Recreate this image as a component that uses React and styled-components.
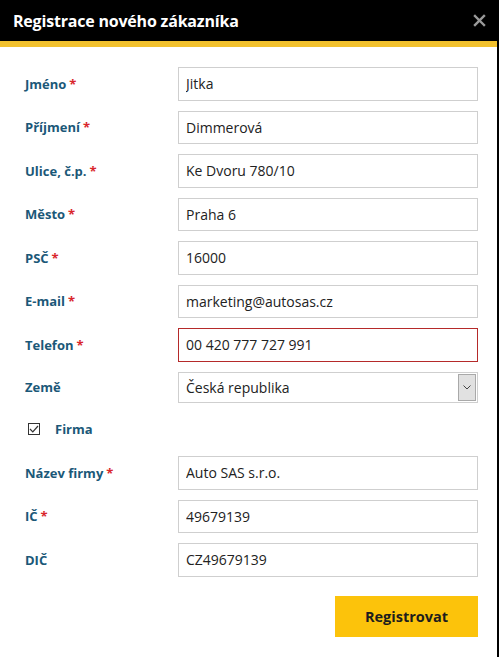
import styled, { createGlobalStyle } from "styled-components";

const GlobalStyle = createGlobalStyle`
  html, body {
    margin: 0;
    padding: 0;
    background: #000;
  }
  * {
    box-sizing: border-box;
  }
`;

const Modal = styled.div`
  width: 497px;
  min-height: 657px;
  background: #fff;
  font-family: "Open Sans", "Noto Sans", sans-serif;
`;

const Header = styled.div`
  height: 47px;
  background: #000;
  border-bottom: 6px solid #f2c12e;
  display: flex;
  align-items: center;
  justify-content: space-between;
  padding: 0 11px 0 13px;
`;

const Title = styled.h1`
  margin: 0;
  color: #fff;
  font-size: 16px;
  font-weight: 700;
  letter-spacing: -0.2px;
`;

const Close = styled.button`
  border: 0;
  background: none;
  padding: 0;
  width: 13px;
  height: 13px;
  cursor: pointer;
  display: flex;
`;

const Form = styled.form`
  display: flex;
  flex-direction: column;
  gap: 10px;
  padding: 20px 19px 20px 25px;
`;

const Row = styled.div`
  display: flex;
  align-items: center;
`;

const Label = styled.label`
  width: 153px;
  font-size: 13px;
  font-weight: 700;
  color: #1b5878;
`;

const Star = styled.span`
  color: #d9262c;
  margin-left: 3px;
`;

const Input = styled.input`
  width: 300px;
  height: 33.5px;
  border: 1px solid ${(p) => (p.$error ? "#b52a2a" : "#cfcfcf")};
  padding: 0 7px;
  font-family: inherit;
  font-size: 14px;
  color: #222;
  outline: none;
`;

const SelectBox = styled.div`
  position: relative;
  width: 300px;
  height: 31px;
  border: 1px solid #cfcfcf;
  display: flex;
  align-items: center;
  padding: 0 7px;
  font-size: 14px;
  color: #222;
`;

const Arrow = styled.div`
  position: absolute;
  right: 1px;
  top: 1px;
  bottom: 1px;
  width: 18px;
  background: #e1e1e1;
  border: 1px solid #a9a9a9;
  display: flex;
  align-items: center;
  justify-content: center;
`;

const CheckRow = styled.div`
  display: flex;
  align-items: center;
  height: 33.5px;
  padding-left: 3px;
  gap: 15px;
`;

const Box = styled.span`
  width: 12px;
  height: 12px;
  border: 1px solid #333;
  display: flex;
  align-items: center;
  justify-content: center;
`;

const Footer = styled.div`
  display: flex;
  justify-content: flex-end;
  margin-top: 9.5px;
`;

const Submit = styled.button`
  width: 143px;
  height: 41px;
  border: 0;
  background: #fcc30b;
  color: #1d1d1d;
  font-family: inherit;
  font-size: 14.5px;
  font-weight: 700;
`;

const Field = ({ label, value, required, error }) => (
  <Row>
    <Label>
      {label}
      {required && <Star>*</Star>}
    </Label>
    <Input defaultValue={value} $error={error} />
  </Row>
);

export default function App() {
  return (
    <>
      <GlobalStyle />
      <Modal>
        <Header>
          <Title>Registrace nového zákazníka</Title>
          <Close aria-label="Zavřít">
            <svg width="13" height="13" viewBox="0 0 13 13">
              <path d="M2 2L11 11M11 2L2 11" stroke="#9a9a9a" strokeWidth="2.4" strokeLinecap="square" />
            </svg>
          </Close>
        </Header>
        <Form>
          <Field label="Jméno" value="Jitka" required />
          <Field label="Příjmení" value="Dimmerová" required />
          <Field label="Ulice, č.p." value="Ke Dvoru 780/10" required />
          <Field label="Město" value="Praha 6" required />
          <Field label="PSČ" value="16000" required />
          <Field label="E-mail" value="marketing@autosas.cz" required />
          <Field label="Telefon" value="00 420 777 727 991" required error />
          <Row>
            <Label>Země</Label>
            <SelectBox>
              Česká republika
              <Arrow>
                <svg width="8" height="5" viewBox="0 0 8 5">
                  <path d="M0.5 0.5L4 4L7.5 0.5" fill="none" stroke="#444" strokeWidth="1" />
                </svg>
              </Arrow>
            </SelectBox>
          </Row>
          <CheckRow>
            <Box>
              <svg width="10" height="8" viewBox="0 0 10 8">
                <path d="M1 4L3.8 6.8L9 1" fill="none" stroke="#333" strokeWidth="1.2" />
              </svg>
            </Box>
            <Label as="span">Firma</Label>
          </CheckRow>
          <Field label="Název firmy" value="Auto SAS s.r.o." required />
          <Field label="IČ" value="49679139" required />
          <Field label="DIČ" value="CZ49679139" />
          <Footer>
            <Submit type="button">Registrovat</Submit>
          </Footer>
        </Form>
      </Modal>
    </>
  );
}
